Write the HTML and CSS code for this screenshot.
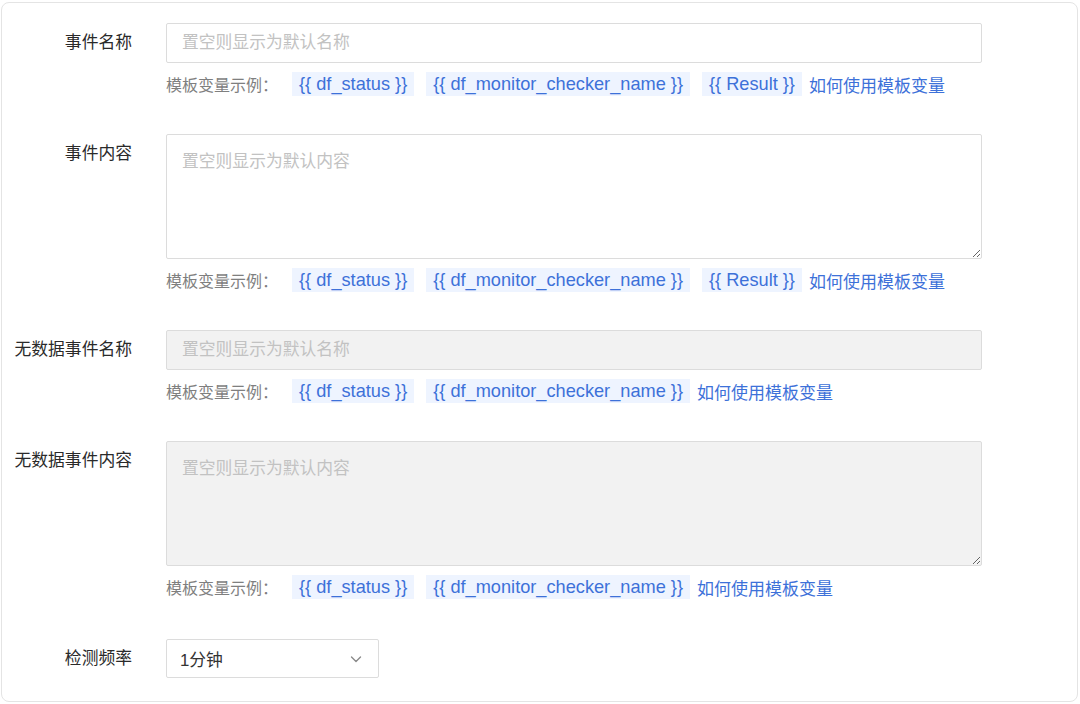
FILE: index.html
```html
<!DOCTYPE html>
<html lang="zh">
<head>
<meta charset="utf-8">
<link rel="stylesheet" href="styles.css">
</head>
<body>
<div class="panel">
  <div class="form">
    <div class="item">
      <div class="label">事件名称</div>
      <div class="field">
        <input class="input" type="text" placeholder="置空则显示为默认名称">
        <div class="hint">
          <span class="hint-title">模板变量示例：</span>
          <span class="tag">{{ df_status }}</span>
          <span class="tag">{{ df_monitor_checker_name }}</span>
          <span class="tag">{{ Result }}</span>
          <a class="link">如何使用模板变量</a>
        </div>
      </div>
    </div>
    <div class="item">
      <div class="label">事件内容</div>
      <div class="field">
        <textarea class="textarea" placeholder="置空则显示为默认内容"></textarea>
        <div class="hint">
          <span class="hint-title">模板变量示例：</span>
          <span class="tag">{{ df_status }}</span>
          <span class="tag">{{ df_monitor_checker_name }}</span>
          <span class="tag">{{ Result }}</span>
          <a class="link">如何使用模板变量</a>
        </div>
      </div>
    </div>
    <div class="item">
      <div class="label">无数据事件名称</div>
      <div class="field">
        <input class="input disabled" type="text" placeholder="置空则显示为默认名称" disabled>
        <div class="hint">
          <span class="hint-title">模板变量示例：</span>
          <span class="tag">{{ df_status }}</span>
          <span class="tag">{{ df_monitor_checker_name }}</span>
          <a class="link">如何使用模板变量</a>
        </div>
      </div>
    </div>
    <div class="item">
      <div class="label">无数据事件内容</div>
      <div class="field">
        <textarea class="textarea disabled" placeholder="置空则显示为默认内容" disabled></textarea>
        <div class="hint">
          <span class="hint-title">模板变量示例：</span>
          <span class="tag">{{ df_status }}</span>
          <span class="tag">{{ df_monitor_checker_name }}</span>
          <a class="link">如何使用模板变量</a>
        </div>
      </div>
    </div>
    <div class="item last">
      <div class="label">检测频率</div>
      <div class="field">
        <div class="select">
          <span class="select-value">1分钟</span>
          <svg class="chevron" width="14" height="14" viewBox="0 0 14 14"><path d="M2.5 5 L7 9.5 L11.5 5" fill="none" stroke="#8a8a8a" stroke-width="1.4" stroke-linecap="round" stroke-linejoin="round"/></svg>
        </div>
      </div>
    </div>
  </div>
</div>
</body>
</html>
```
FILE: styles.css
```css
* { box-sizing: border-box; }
html, body { margin: 0; padding: 0; background: #ffffff; }
body {
  font-family: "Liberation Sans", "Noto Sans CJK SC", sans-serif;
  width: 1080px;
  height: 704px;
  overflow: hidden;
  padding: 2px 2px 0 1px;
}
.panel {
  width: 1077px;
  height: 700px;
  border: 1px solid #e4e4e4;
  border-radius: 8px;
  padding-top: 20px;
}
.form {
  display: flex;
  flex-direction: column;
  gap: 38px;
}
.item {
  display: grid;
  grid-template-columns: 129px 816px;
  column-gap: 35px;
  align-items: start;
}
.label {
  text-align: right;
  font-size: 16.8px;
  line-height: 40px;
  color: #2a2a2a;
  font-weight: 400;
  white-space: nowrap;
  margin-right: -1px;
}
.field { display: flex; flex-direction: column; }
.input, .textarea {
  width: 816px;
  border: 1px solid #dcdcdc;
  border-radius: 2px;
  font-family: inherit;
  font-size: 16.8px;
  color: #333;
  padding: 0 15px;
  outline: none;
  background: #ffffff;
}
.input { height: 40px; }
.textarea {
  height: 125px;
  padding-top: 15px;
  line-height: 24px;
  resize: vertical;
  display: block;
}
.input::placeholder, .textarea::placeholder { color: #c2c2c2; }
.disabled { background: #f2f2f2; }
.hint {
  display: flex;
  align-items: center;
  margin-top: 9px;
  height: 24px;
  font-size: 16px;
  white-space: nowrap;
}
.hint-title { color: #7f7f7f; margin-right: 14px; }
.tag {
  background: #eef4ff;
  color: #3d71d9;
  height: 24px;
  line-height: 24px;
  padding: 0 7px;
  font-size: 18.2px;
  margin-right: 12px;
}
.link { color: #3d71d9; font-size: 17px; margin-left: -5px; }
.item.last { margin-top: 2px; }
.select {
  width: 213px;
  height: 39px;
  border: 1px solid #dcdcdc;
  border-radius: 2px;
  display: flex;
  align-items: center;
  justify-content: space-between;
  padding: 0 15px 0 13px;
  font-size: 16.8px;
  color: #333;
}
.chevron { display: block; }
```
